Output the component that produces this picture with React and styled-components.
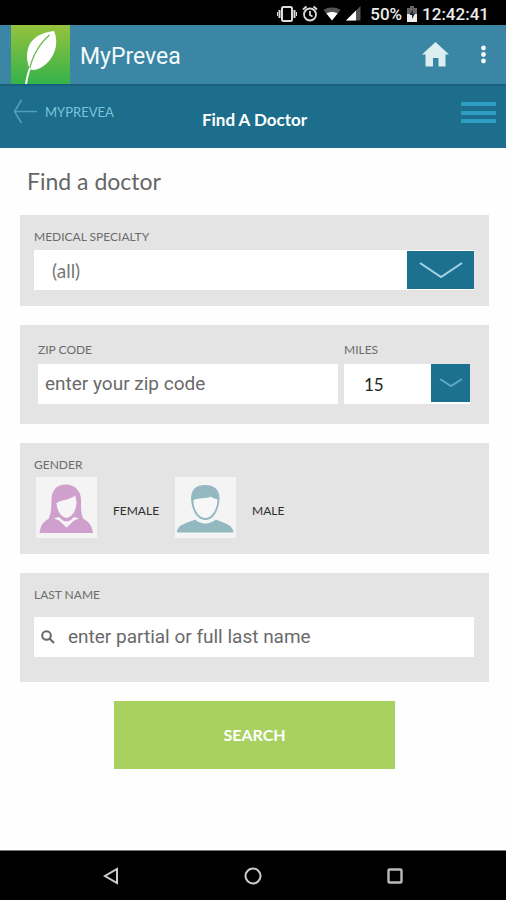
import React, { useState } from 'react';
import styled, { createGlobalStyle } from 'styled-components';

const GlobalStyle = createGlobalStyle`
    * {
        box-sizing: border-box;
    }
    body {
        margin: 0;
        background: #fefefe;
        font-family: Lato, sans-serif;
    }
    button, input, select {
        margin: 0;
        border: none;
        border-radius: 0;
        font-family: inherit;
    }
`;

const Page = styled.div`
    display: flex;
    flex-direction: column;
    min-height: 100vh;
`;

const StatusBar = styled.div`
    display: flex;
    align-items: center;
    justify-content: flex-end;
    gap: 5px;
    height: 25px;
    padding: 2px 17px 0 0;
    background: #000;
    color: #ececec;
    font-family: Roboto, sans-serif;
    font-size: 17px;
    font-weight: 500;
`;

const StatusIcons = styled.div`
    display: flex;
    align-items: center;
    gap: 5px;
    padding-right: 4px;
`;

const AppBar = styled.header`
    display: flex;
    align-items: center;
    height: 59px;
    padding: 0 20px 0 11px;
    background: #3a86a4;
`;

const AppName = styled.div`
    flex: 1;
    padding: 3px 0 0 10px;
    color: #f4fafc;
    font-family: Roboto, sans-serif;
    font-size: 23px;
`;

const IconButton = styled.button`
    display: flex;
    align-items: center;
    justify-content: center;
    padding: 0;
    background: none;
    cursor: pointer;
`;

const AppActions = styled.div`
    display: flex;
    align-items: center;
    gap: 32px;
`;

const TitleBar = styled.nav`
    display: grid;
    grid-template-columns: 1fr auto 1fr;
    align-items: center;
    height: 64px;
    padding: 0 10px 8px 13px;
    border-top: 2px solid #1a5f7c;
    background: #1d6e8c;
`;

const BackLink = styled.a`
    display: flex;
    align-items: center;
    gap: 8px;
    padding-bottom: 3px;
    color: #7cc3dc;
    font-size: 13px;
    text-decoration: none;
`;

const BarTitle = styled.div`
    padding-top: 12px;
    color: #fff;
    font-size: 17px;
    font-weight: 700;
`;

const MenuButton = styled(IconButton)`
    justify-self: end;
`;

const Form = styled.form`
    display: flex;
    flex: 1;
    flex-direction: column;
    gap: 19px;
    padding: 19px 17px 19px 20px;
`;

const Heading = styled.h1`
    margin: 0;
    padding-left: 7px;
    color: #666;
    font-size: 23px;
    font-weight: 400;
    line-height: 29px;
`;

const Panel = styled.section`
    padding: ${props => props.$pad || '12px 15px 16px 14px'};
    background: #e4e4e4;
`;

const GenderPanel = styled.fieldset`
    min-width: 0;
    margin: 0;
    padding: 12px 15px 16px 14px;
    border: none;
    background: #e4e4e4;
`;

const FieldLabel = styled.label`
    display: block;
    padding-bottom: ${props => props.$gap || '4px'};
    color: #6c6c6c;
    font-size: 12px;
    line-height: 19px;
`;

const Legend = styled.legend`
    float: left;
    width: 100%;
    padding: 0;
    color: #6c6c6c;
    font-size: 12px;
    line-height: 19px;
`;

const SplitRow = styled.div`
    display: grid;
    grid-template-columns: minmax(0, 300fr) minmax(0, 126fr);
    gap: 6px;
`;

// the select fills the whole box and the blue arrow sits in its right end
const SelectBox = styled.div`
    display: grid;
    grid-template-columns: 1fr auto;
    align-items: ${props => props.$align || 'center'};
`;

const Select = styled.select`
    grid-area: 1 / 1 / 2 / 3;
    width: 100%;
    height: 40px;
    padding: 0 0 0 ${props => props.$indent};
    appearance: none;
    background: #fff;
    color: ${props => props.$color};
    font-size: ${props => props.$size || '17px'};
    opacity: 1;
`;

const Arrow = styled.span`
    display: flex;
    grid-area: 1 / 2 / 2 / 3;
    align-items: center;
    justify-content: center;
    width: ${props => props.$width};
    height: 38px;
    background: #1c7090;
    color: ${props => props.$color};
    pointer-events: none;
`;

const InputBox = styled.div`
    display: flex;
    align-items: center;
    height: 40px;
    padding: 0 7px;
    background: #fff;
`;

const Input = styled.input`
    flex: 1;
    min-width: 0;
    height: 100%;
    padding: 0 0 2px;
    outline: none;
    background: none;
    color: #555;
    font-family: Roboto, sans-serif;
    font-size: 19px;
    &::placeholder {
        color: #6a6a6a;
        opacity: 1;
    }
`;

const SearchGlyph = styled.svg`
    flex: none;
    margin-right: 13px;
`;

const GenderRow = styled.div`
    display: flex;
    clear: both;
    gap: 16px;
    padding: 3px 0 0 2px;
`;

const GenderOption = styled.label`
    display: flex;
    position: relative;
    align-items: center;
    gap: 16px;
    color: #2e2e2e;
    font-size: 12px;
    cursor: pointer;
`;

const HiddenRadio = styled.input`
    position: absolute;
    opacity: 0;
`;

const Avatar = styled.span`
    display: block;
    width: 61px;
    height: 61px;
    background: #f4f4f4;
`;

const GenderName = styled.span`
    padding-top: 5px;
`;

const SubmitButton = styled.button`
    align-self: center;
    width: 60%;
    height: 68px;
    padding: 0 0 2px;
    background: #a8d160;
    color: #fff;
    font-size: 16px;
    font-weight: 700;
    cursor: pointer;
`;

const SystemBar = styled.footer`
    display: flex;
    align-items: center;
    justify-content: space-around;
    height: 50px;
    padding: 0 41px;
    border-top: 1px solid #777;
    background: #000;
`;

const LeafLogo = () => (
    <svg width="59" height="59" viewBox="0 0 59 59">
        <defs>
            <linearGradient id="leafBg" x1="0" y1="0" x2="0" y2="1">
                <stop offset="0" stopColor="#95c23d" />
                <stop offset="1" stopColor="#35b34a" />
            </linearGradient>
        </defs>
        <rect width="59" height="59" fill="url(#leafBg)" />
        <path d="M43 6C34 7 26 10 21 16C15 23 14.500 35 19 44.500C25 46 32 43 38 36C45 28 47.500 16 43 6Z" fill="#fff" />
        <path d="M38.500 10C29 18 21 31 18.500 45" fill="none" stroke="#65b94a" strokeWidth="1.300" />
        <path d="M19 43C17 48 16 53 15 59" fill="none" stroke="#fff" strokeWidth="2" />
    </svg>
);

const VibrateIcon = () => (
    <svg width="20" height="18" viewBox="0 0 20 18" fill="none" stroke="#ddd" strokeWidth="2">
        <rect x="5" y="2" width="10" height="14" rx="1.500" />
        <path d="M2.500 5V13M17.500 5V13" />
        <path d="M.5 7V11M19.500 7V11" strokeWidth="1" />
    </svg>
);

const AlarmIcon = () => (
    <svg width="16" height="18" viewBox="0 0 16 18" fill="none" stroke="#ddd" strokeWidth="1.800">
        <circle cx="8" cy="9.500" r="6" />
        <path d="M8 6V10L10.500 11.500M1 4.500L4.500 1.500M15 4.500L11.500 1.500" />
    </svg>
);

const WifiIcon = () => (
    <svg width="18" height="14" viewBox="0 0 18 14">
        <path d="M9 13.500L.5 3C5-.3 13-.3 17.500 3Z" fill="#555" />
        <path d="M9 13.500L3.500 6.500C6.500 4.500 11.500 4.500 14.500 6.500Z" fill="#fff" />
    </svg>
);

const SignalIcon = () => (
    <svg width="15" height="15" viewBox="0 0 15 15">
        <path d="M0 14.500L14.500 0V14.500Z" fill="#555" />
        <path d="M0 14.500L10 4.500V14.500Z" fill="#fff" />
    </svg>
);

const BatteryIcon = () => (
    <svg width="10" height="16" viewBox="0 0 10 16">
        <path d="M3 0H7V2H10V8H0V2H3Z" fill="#666" />
        <path d="M0 8H10V16H0Z" fill="#eee" />
        <path d="M6 3L2.500 9H5V13L8 7.500H5.500Z" fill="#222" />
    </svg>
);

const HomeIcon = () => (
    <svg width="27" height="25" viewBox="0 0 27 25">
        <path d="M13.500 0L27 12.500H23.500V24.500H16.500V16H11V24.500H3.500V12.500H0Z" fill="#dceef0" />
    </svg>
);

const MoreIcon = () => (
    <svg width="5" height="19" viewBox="0 0 5 19" fill="#f2fafb">
        <circle cx="2.500" cy="3" r="2.400" />
        <circle cx="2.500" cy="9.500" r="2.400" />
        <circle cx="2.500" cy="16" r="2.400" />
    </svg>
);

const BackIcon = () => (
    <svg width="24" height="25" viewBox="0 0 24 25" fill="none" stroke="#4fa0bd" strokeWidth="1.600">
        <path d="M8.500 1L1.500 12.500L8.500 24M2 12.500H24" />
    </svg>
);

const MenuIcon = () => (
    <svg width="35" height="22" viewBox="0 0 35 22" stroke="#2e9dc3" strokeWidth="4">
        <path d="M0 2H35M0 11H35M0 19H35" />
    </svg>
);

const Chevron = ({ width, height }) => (
    <svg width={width} height={height} viewBox={`0 0 ${width} ${height}`} fill="none" stroke="currentColor" strokeWidth="2">
        <path d={`M1 1L${width / 2} ${height - 2}L${width - 1} 1`} />
    </svg>
);

const FemaleIcon = () => (
    <svg width="61" height="61" viewBox="0 0 61 61">
        <path d="M29.500 7.500C20 7.500 15.500 14 15.500 23C15.500 32 15 37 12.500 42C8 44 4.500 48 3.500 56H57C56 48 52 44 47.500 42C45 37 45 32 45 23C45 14 39 7.500 29.500 7.500Z" fill="#cfa0cd" />
        <path d="M39 18.500C34 23 26 22.500 20.500 26C21 34 25 40 30.500 41C36 40 40 34 40.500 26C40.500 23 40 21 39 18.500Z" fill="#f7f4f7" />
        <path d="M18 41.500L23 40C26 43 28 44.500 30.500 44.500C33 44.500 35 43 38 40L43 41.500L38 43.500L30.500 50.500L23 43.500Z" fill="#f7f4f7" />
    </svg>
);

const MaleIcon = () => (
    <svg width="61" height="61" viewBox="0 0 61 61">
        <path d="M16 20C17 12 21 8 30 8C39 8 43.500 12 44.500 20C44.500 31 39.500 43 30.500 43C21 43 16 31 16 20Z" fill="#93b8c0" />
        <path d="M18.500 23C24 20.500 31 22 36.500 19.500C38 22.500 40.500 21 42.500 22.500C42.500 31 37.500 41 30.500 41C23 41 18 31 18.500 23Z" fill="#f7f7f7" />
        <path d="M2 55.500C2 47 13 46 20 42.500C26 48 34 48 41 42.500C48 46 58 47 58.500 55.500Z" fill="#93b8c0" />
    </svg>
);

const App = () => {

    const [specialty, setSpecialty] = useState('all');
    const [miles, setMiles] = useState('15');

    return (
        <Page>
            <GlobalStyle />
            <StatusBar>
                <StatusIcons>
                    <VibrateIcon />
                    <AlarmIcon />
                    <WifiIcon />
                    <SignalIcon />
                </StatusIcons>
                <span>50%</span>
                <BatteryIcon />
                <span>12:42:41</span>
            </StatusBar>

            <AppBar>
                <LeafLogo />
                <AppName>MyPrevea</AppName>
                <AppActions>
                    <IconButton type="button" aria-label="Home"><HomeIcon /></IconButton>
                    <IconButton type="button" aria-label="More options"><MoreIcon /></IconButton>
                </AppActions>
            </AppBar>

            <TitleBar>
                <BackLink href="#">
                    <BackIcon />
                    MYPREVEA
                </BackLink>
                <BarTitle>Find A Doctor</BarTitle>
                <MenuButton type="button" aria-label="Menu"><MenuIcon /></MenuButton>
            </TitleBar>

            <Form onSubmit={(e) => e.preventDefault()}>
                <Heading>Find a doctor</Heading>

                <Panel>
                    <FieldLabel htmlFor="specialty">MEDICAL SPECIALTY</FieldLabel>
                    <SelectBox>
                        <Select id="specialty" $indent="18px" $color="#777" $size="19px" value={specialty} onChange={(e) => setSpecialty(e.target.value)}>
                            <option value="all">(all)</option>
                        </Select>
                        <Arrow $width="67px" $color="#a5d3e2"><Chevron width={44} height={17} /></Arrow>
                    </SelectBox>
                </Panel>

                <Panel $pad="15px 19px 20px 18px">
                    <SplitRow>
                        <div>
                            <FieldLabel htmlFor="zip" $gap="5px">ZIP CODE</FieldLabel>
                            <InputBox>
                                <Input id="zip" type="text" placeholder="enter your zip code" />
                            </InputBox>
                        </div>
                        <div>
                            <FieldLabel htmlFor="miles" $gap="5px">MILES</FieldLabel>
                            <SelectBox $align="start">
                                <Select id="miles" $indent="20px" $color="#222" value={miles} onChange={(e) => setMiles(e.target.value)}>
                                    <option value="15">15</option>
                                </Select>
                                <Arrow $width="39px" $color="#62a9c3"><Chevron width={24} height={10} /></Arrow>
                            </SelectBox>
                        </div>
                    </SplitRow>
                </Panel>

                <GenderPanel>
                    <Legend>GENDER</Legend>
                    <GenderRow>
                        <GenderOption>
                            <HiddenRadio type="radio" name="gender" value="female" />
                            <Avatar><FemaleIcon /></Avatar>
                            <GenderName>FEMALE</GenderName>
                        </GenderOption>
                        <GenderOption>
                            <HiddenRadio type="radio" name="gender" value="male" />
                            <Avatar><MaleIcon /></Avatar>
                            <GenderName>MALE</GenderName>
                        </GenderOption>
                    </GenderRow>
                </GenderPanel>

                <Panel $pad="12px 15px 25px 14px">
                    <FieldLabel htmlFor="lastName" $gap="13px">LAST NAME</FieldLabel>
                    <InputBox>
                        <SearchGlyph width="14" height="14" viewBox="0 0 14 14" fill="none" stroke="#666" strokeWidth="2">
                            <circle cx="5.500" cy="5.500" r="4.300" />
                            <path d="M8.500 8.500L13 13" />
                        </SearchGlyph>
                        <Input id="lastName" type="text" placeholder="enter partial or full last name" />
                    </InputBox>
                </Panel>

                <SubmitButton type="submit">SEARCH</SubmitButton>
            </Form>

            <SystemBar>
                <IconButton type="button" aria-label="Back">
                    <svg width="16" height="18" viewBox="0 0 16 18" fill="none" stroke="#ccc" strokeWidth="2">
                        <path d="M14 2V16L2 9Z" />
                    </svg>
                </IconButton>
                <IconButton type="button" aria-label="Home screen">
                    <svg width="18" height="18" viewBox="0 0 18 18" fill="none" stroke="#ccc" strokeWidth="2">
                        <circle cx="9" cy="9" r="7.500" />
                    </svg>
                </IconButton>
                <IconButton type="button" aria-label="Recent apps">
                    <svg width="16" height="16" viewBox="0 0 16 16" fill="none" stroke="#bbb" strokeWidth="2.400">
                        <rect x="1.500" y="1.500" width="13" height="13" rx="1" />
                    </svg>
                </IconButton>
            </SystemBar>
        </Page>
    );
};

export default App;
